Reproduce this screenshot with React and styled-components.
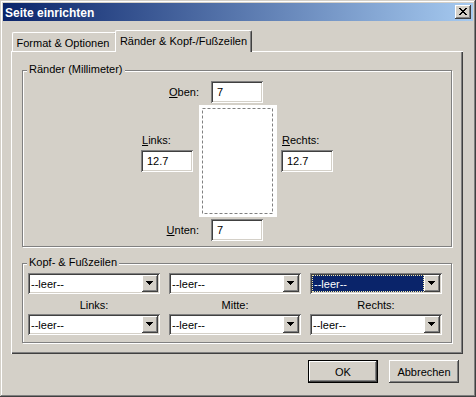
import React from "react";
import styled, { createGlobalStyle, css } from "styled-components";

const Global = createGlobalStyle`
  html, body { margin: 0; padding: 0; background: #d4d0c8; }
  body {
    font-family: "Liberation Sans", Arial, sans-serif;
    font-size: 11px;
    color: #000;
  }
  * { box-sizing: border-box; }
`;

const raised = css`
  box-shadow: inset -1px -1px #404040, inset 1px 1px #ffffff,
    inset -2px -2px #808080, inset 2px 2px #d4d0c8;
`;

const sunken = css`
  box-shadow: inset 1px 1px #808080, inset -1px -1px #ffffff,
    inset 2px 2px #404040, inset -2px -2px #d4d0c8;
`;

const Window = styled.div`
  width: 476px;
  height: 397px;
  background: #d4d0c8;
  padding: 3px;
  display: flex;
  flex-direction: column;
  box-shadow: inset -1px -1px #404040, inset 1px 1px #d4d0c8,
    inset -2px -2px #808080, inset 2px 2px #ffffff;
`;

const TitleBar = styled.div`
  height: 18px;
  flex: none;
  display: flex;
  align-items: center;
  justify-content: space-between;
  padding: 0 2px 0 2px;
  background: linear-gradient(to right, #0a246a, #a6caf0);
`;

const TitleText = styled.span`
  color: #fff;
  font-weight: bold;
  font-size: 12px;
  line-height: 18px;
  padding-top: 1px;
`;

const CloseButton = styled.div`
  width: 16px;
  height: 14px;
  background: #d4d0c8;
  display: flex;
  align-items: center;
  justify-content: center;
  padding: 0 1px 1px 0;
  ${raised};
`;

const Body = styled.div`
  flex: 1;
  display: flex;
  flex-direction: column;
  padding: 9px 0 0 8px;
`;

const TabStrip = styled.div`
  height: 21px;
  display: flex;
  align-items: flex-end;
  padding-left: 1px;
`;

const Tab = styled.div`
  position: relative;
  width: ${(p) => p.$w}px;
  height: ${(p) => (p.$active ? 22 : 19)}px;
  margin: ${(p) => (p.$active ? "0 -2px -1px -2px" : "0")};
  z-index: ${(p) => (p.$active ? 2 : 1)};
  background: #d4d0c8;
  border-top: 1px solid #fff;
  border-left: 1px solid #fff;
  border-right: 1px solid #404040;
  border-radius: 2px 2px 0 0;
  box-shadow: inset -1px 0 #808080;
  display: flex;
  align-items: center;
  justify-content: center;
  padding: ${(p) => (p.$active ? "0 0 2px 0" : "1px 3px 0 0")};
  white-space: nowrap;
`;

const Panel = styled.div`
  width: 452px;
  height: 303px;
  position: relative;
  z-index: 1;
  background: #d4d0c8;
  box-shadow: inset 1px 1px #fff, inset -1px -1px #404040,
    inset -2px -2px #808080;
  padding: 19px 0 0 11px;
  display: flex;
  flex-direction: column;
  gap: 16px;
`;

const Group = styled.div`
  position: relative;
  width: 430px;
  height: ${(p) => p.$h}px;
  border: 1px solid #808080;
  box-shadow: inset 1px 1px #fff, 1px 1px #fff;
  padding: ${(p) => p.$pad};
`;

const Legend = styled.span`
  position: absolute;
  top: -8px;
  left: 4px;
  padding: 0 2px;
  line-height: 13px;
  background: #d4d0c8;
  white-space: nowrap;
`;

const MarginGrid = styled.div`
  display: grid;
  grid-template-columns: 52px 6px 78px 4px 52px;
  grid-template-rows: 22px 112px 22px;
  row-gap: 2px;
  justify-content: center;
`;

const EdgeLabel = styled.label`
  grid-column: 1 / 3;
  justify-self: end;
  align-self: center;
  white-space: nowrap;
`;

const SideCell = styled.div`
  grid-column: ${(p) => p.$col};
  display: flex;
  flex-direction: column;
  gap: 3px;
  padding-top: 29px;
`;

const SideLabel = styled.label`
  line-height: 13px;
  padding-left: 1px;
`;

const Field = styled.div`
  width: 52px;
  height: 22px;
  background: #fff;
  ${sunken};
  padding: 0 0 0 6px;
  display: flex;
  align-items: center;
  grid-column: ${(p) => p.$col || "auto"};
  margin-left: ${(p) => p.$ml || 0}px;
`;

const PageCell = styled.div`
  grid-column: 3;
  background: #fff;
`;

const HFGrid = styled.div`
  display: grid;
  grid-template-columns: repeat(3, 132px);
  grid-template-rows: 21px 20px 21px;
  column-gap: 9px;
`;

const ColLabel = styled.div`
  text-align: center;
  align-self: center;
  padding-top: 1px;
`;

const Select = styled.div`
  width: 132px;
  height: 21px;
  background: #fff;
  ${sunken};
  padding: 2px;
  display: flex;
`;

const SelectValue = styled.div`
  flex: 1;
  display: flex;
  align-items: center;
  padding-left: ${(p) => (p.$focused ? 2 : 1)}px;
  ${(p) =>
    p.$focused &&
    css`
      background: #0a246a;
      color: #fff;
      outline: 1px dotted #f3e9a8;
      outline-offset: -1px;
    `}
`;

const DropButton = styled.div`
  width: 16px;
  height: 17px;
  background: #d4d0c8;
  ${raised};
  display: flex;
  align-items: center;
  justify-content: center;
  padding: 0 1px 1px 0;
`;

const ButtonRow = styled.div`
  display: flex;
  justify-content: flex-end;
  gap: 11px;
  padding-right: 14px;
  margin-top: 6px;
`;

const Button = styled.div`
  width: 70px;
  height: 23px;
  display: flex;
  align-items: center;
  justify-content: center;
  background: #d4d0c8;
  ${raised};
  ${(p) =>
    p.$default &&
    css`
      border: 1px solid #000;
    `}
`;

const CloseIcon = () => (
  <svg width="8" height="7" viewBox="0 0 8 7" shapeRendering="crispEdges">
    <path
      fill="#000"
      d="M0 0h2v1H0zM6 0h2v1H6zM1 1h2v1H1zM5 1h2v1H5zM2 2h4v1H2zM3 3h2v1H3zM2 4h4v1H2zM1 5h2v1H1zM5 5h2v1H5zM0 6h2v1H0zM6 6h2v1H6z"
    />
  </svg>
);

const ArrowIcon = () => (
  <svg width="7" height="4" viewBox="0 0 7 4" shapeRendering="crispEdges">
    <path fill="#000" d="M0 0h7v1H0zM1 1h5v1H1zM2 2h3v1H2zM3 3h1v1H3z" />
  </svg>
);

const PagePreview = () => (
  <svg width="78" height="112" viewBox="0 0 78 112">
    <rect
      x="3.5"
      y="3.5"
      width="70"
      height="105"
      fill="none"
      stroke="#808080"
      strokeWidth="1"
      strokeDasharray="3 2"
    />
  </svg>
);

const Combo = ({ focused }) => (
  <Select>
    <SelectValue $focused={focused}>--leer--</SelectValue>
    <DropButton>
      <ArrowIcon />
    </DropButton>
  </Select>
);

export default function App() {
  return (
    <>
      <Global />
      <Window>
        <TitleBar>
          <TitleText>Seite einrichten</TitleText>
          <CloseButton>
            <CloseIcon />
          </CloseButton>
        </TitleBar>
        <Body>
          <TabStrip>
            <Tab $w={105}>Format &amp; Optionen</Tab>
            <Tab $w={137} $active>
              Ränder &amp; Kopf-/Fußzeilen
            </Tab>
          </TabStrip>
          <Panel>
            <Group $h={177} $pad="10px 0 0 0">
              <Legend>Ränder (Millimeter)</Legend>
              <MarginGrid>
                <EdgeLabel>
                  <u>O</u>ben:
                </EdgeLabel>
                <Field $col={3} $ml={12}>7</Field>
                <SideCell $col={1}>
                  <SideLabel>
                    <u>L</u>inks:
                  </SideLabel>
                  <Field>12.7</Field>
                </SideCell>
                <PageCell>
                  <PagePreview />
                </PageCell>
                <SideCell $col={5}>
                  <SideLabel>
                    <u>R</u>echts:
                  </SideLabel>
                  <Field>12.7</Field>
                </SideCell>
                <EdgeLabel>
                  <u>U</u>nten:
                </EdgeLabel>
                <Field $col={3} $ml={12}>7</Field>
              </MarginGrid>
            </Group>
            <Group $h={80} $pad="9px 0 0 5px">
              <Legend>Kopf- &amp; Fußzeilen</Legend>
              <HFGrid>
                <Combo />
                <Combo />
                <Combo focused />
                <ColLabel>Links:</ColLabel>
                <ColLabel>Mitte:</ColLabel>
                <ColLabel>Rechts:</ColLabel>
                <Combo />
                <Combo />
                <Combo />
              </HFGrid>
            </Group>
          </Panel>
          <ButtonRow>
            <Button $default>OK</Button>
            <Button>Abbrechen</Button>
          </ButtonRow>
        </Body>
      </Window>
    </>
  );
}
